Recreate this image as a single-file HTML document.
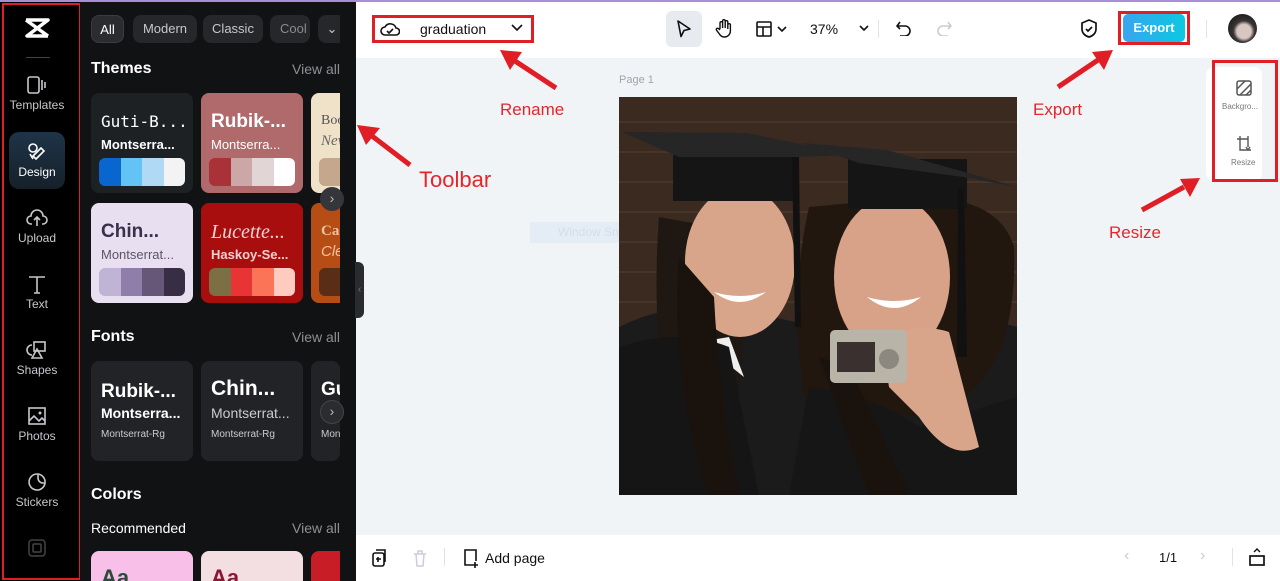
<!DOCTYPE html>
<html><head><meta charset="utf-8"><style>
*{margin:0;padding:0;box-sizing:border-box}
html,body{width:1280px;height:581px;overflow:hidden}
body{position:relative;font-family:"Liberation Sans",sans-serif;background:#f1f4f7}
.abs{position:absolute}
#side{left:0;top:0;width:80px;height:581px;background:#000}
#redside{left:2px;top:3px;width:79px;height:577px;border:2px solid #e01e25}
.nav{position:absolute;left:0;width:74px;text-align:center;color:#c8c8cc;font-size:12px}
.nav svg{display:block;margin:0 auto 3px}
#panel{left:80px;top:0;width:276px;height:581px;background:#111214;overflow:hidden}
.chip{position:absolute;top:15px;height:28px;border-radius:8px;background:#26272b;color:#c7c8cc;font-size:13px;line-height:28px;text-align:center}
.h{position:absolute;color:#fff;font-weight:bold;font-size:16px}
.va{position:absolute;right:16px;color:#8e8f94;font-size:14px}
.card{position:absolute;width:102px;height:100px;border-radius:8px;overflow:hidden}
.t1{position:absolute;left:10px;top:18px;font-size:19px;font-weight:bold;white-space:nowrap}
.t2{position:absolute;left:10px;top:44px;font-size:13px;white-space:nowrap}
.pal{position:absolute;left:8px;top:65px;width:86px;height:28px;border-radius:6px;overflow:hidden;display:flex}
.pal i{flex:1}
#top{left:356px;top:0;width:924px;height:58px;background:#fff}
#bot{left:356px;top:535px;width:924px;height:46px;background:#fff}
.ann{position:absolute;color:#e4262b;font-size:17px}
</style></head><body>
<div class="abs" style="left:0;top:0;width:1280px;height:2px;background:#a78fd8;z-index:5"></div>

<div id="side" class="abs">
 <svg class="abs" style="left:24px;top:17px" width="26" height="22" viewBox="0 0 26 22"><path d="M2 3h22L3 19h21M2 3l22 16" stroke="#fff" stroke-width="3.5" fill="none" stroke-linejoin="round"/></svg>
 <div class="abs" style="left:26px;top:57px;width:24px;height:1px;background:#444"></div>
 <div class="nav" style="top:75px"><svg width="22" height="20" viewBox="0 0 22 20"><rect x="2" y="2" width="11" height="16" rx="2" stroke="#c8c8cc" stroke-width="1.6" fill="none"/><path d="M16 5v10M19 7v6" stroke="#c8c8cc" stroke-width="1.6"/></svg>Templates</div>
 <div class="abs" style="left:9px;top:132px;width:56px;height:57px;border-radius:10px;background:linear-gradient(#1e3448,#16202a)"></div>
 <div class="nav" style="top:142px;color:#fff"><svg width="22" height="20" viewBox="0 0 22 20"><circle cx="7" cy="6" r="4" stroke="#fff" stroke-width="1.6" fill="none"/><path d="M10 17l8-8-3-3-8 8zM4 12l3 5" stroke="#fff" stroke-width="1.6" fill="none"/></svg>Design</div>
 <div class="nav" style="top:208px"><svg width="22" height="20" viewBox="0 0 22 20"><path d="M6 16H5a4 4 0 010-8 6 6 0 0112 0 4 4 0 010 8h-1M11 9v9M8 12l3-3 3 3" stroke="#c8c8cc" stroke-width="1.6" fill="none"/></svg>Upload</div>
 <div class="nav" style="top:274px"><svg width="22" height="20" viewBox="0 0 22 20"><path d="M3 3h16M11 3v16M8 19h6" stroke="#c8c8cc" stroke-width="1.6" fill="none"/></svg>Text</div>
 <div class="nav" style="top:340px"><svg width="22" height="20" viewBox="0 0 22 20"><rect x="8" y="2" width="11" height="9" stroke="#c8c8cc" stroke-width="1.6" fill="none"/><path d="M6 5a5 5 0 000 10M11 9l-5 9h10z" stroke="#c8c8cc" stroke-width="1.6" fill="none"/></svg>Shapes</div>
 <div class="nav" style="top:406px"><svg width="22" height="20" viewBox="0 0 22 20"><rect x="3" y="2" width="16" height="16" stroke="#c8c8cc" stroke-width="1.6" fill="none"/><path d="M3 15l5-5 5 5 3-3 3 3" stroke="#c8c8cc" stroke-width="1.6" fill="none"/><circle cx="14" cy="7" r="1.5" fill="#c8c8cc"/></svg>Photos</div>
 <div class="nav" style="top:472px"><svg width="22" height="20" viewBox="0 0 22 20"><path d="M19 11A8 8 0 1111 2a8 8 0 018 9zM12 2v4a5 5 0 005 5h2" stroke="#c8c8cc" stroke-width="1.6" fill="none"/></svg>Stickers</div>
 <svg class="abs" style="left:28px;top:539px" width="18" height="18"><rect x="1" y="1" width="16" height="16" rx="3" stroke="#444" stroke-width="1.5" fill="none"/><rect x="5" y="5" width="8" height="8" rx="1" stroke="#444" stroke-width="1.5" fill="none"/></svg>
</div>
<div id="redside" class="abs"></div>

<div id="panel" class="abs">
 <div class="chip" style="left:11px;width:33px;background:#2a2c30;border:1px solid #3a3c40;color:#fff">All</div>
 <div class="chip" style="left:53px;width:64px">Modern</div>
 <div class="chip" style="left:123px;width:60px">Classic</div>
 <div class="chip" style="left:190px;width:40px;text-align:left;padding-left:10px;color:#8a8b90">Cool</div>
 <div class="chip" style="left:238px;width:28px">⌄</div>
 <div class="h" style="left:11px;top:60px">Themes</div><div class="va" style="top:61px">View all</div>
 <div class="card" style="left:11px;top:93px;background:#1d2124"><div class="t1" style="color:#fff;font-family:'DejaVu Sans Mono',monospace;font-weight:normal;font-size:16px;top:19px">Guti-B...</div><div class="t2" style="color:#fff;font-weight:bold">Montserra...</div><div class="pal"><i style="background:#0a66cf"></i><i style="background:#63c3f5"></i><i style="background:#b0d9f5"></i><i style="background:#f3f3f3"></i></div></div>
 <div class="card" style="left:121px;top:93px;background:#b16a6c"><div class="t1" style="color:#fff">Rubik-...</div><div class="t2" style="color:#fff">Montserra...</div><div class="pal"><i style="background:#a83237"></i><i style="background:#cba7a7"></i><i style="background:#e1d5d5"></i><i style="background:#fff"></i></div></div>
 <div class="card" style="left:231px;top:93px;background:#efe2c9;width:40px"><div class="t1" style="color:#555;font-family:'Liberation Serif',serif;font-weight:normal;font-size:14px;top:20px">Boo</div><div class="t2" style="color:#666;font-family:'Liberation Serif',serif;font-style:italic;font-size:15px;top:40px">New</div><div class="pal" style="background:#c4a78c"></div></div>
 <div class="card" style="left:11px;top:203px;background:#e8e0f1"><div class="t1" style="color:#3a2f4c">Chin...</div><div class="t2" style="color:#5c5566">Montserrat...</div><div class="pal"><i style="background:#bfb3d6"></i><i style="background:#8f7eaa"></i><i style="background:#665677"></i><i style="background:#372d45"></i></div></div>
 <div class="card" style="left:121px;top:203px;background:#a80e0e"><div class="t1" style="color:#f3d3d3;font-family:'Liberation Serif',serif;font-style:italic;font-weight:normal;font-size:20px">Lucette...</div><div class="t2" style="color:#f3d0d0;font-weight:bold">Haskoy-Se...</div><div class="pal"><i style="background:#7c6e45"></i><i style="background:#e93436"></i><i style="background:#fb7457"></i><i style="background:#ffcac0"></i></div></div>
 <div class="card" style="left:231px;top:203px;background:#b54d15;width:40px"><div class="t1" style="color:#f0c0a0;font-family:'Liberation Serif',serif;font-size:15px;top:20px">Ca</div><div class="t2" style="color:#f0c0a0;font-style:italic;font-size:15px;top:40px">Cle</div><div class="pal" style="background:#5a2d17"></div></div>
 <div class="abs" style="left:260px;top:0;width:16px;height:581px;background:#111214"></div>
 <div class="abs" style="left:240px;top:187px;width:24px;height:24px;border-radius:12px;background:#34363a;color:#bbb;text-align:center;line-height:22px;font-size:14px">›</div>
 <div class="h" style="left:11px;top:328px">Fonts</div><div class="va" style="top:329px">View all</div>
 <div class="card" style="left:11px;top:361px;background:#222327"><div class="t1" style="color:#fff;top:20px">Rubik-...</div><div class="t2" style="color:#fff;font-weight:bold;font-size:14px">Montserra...</div><div class="t2" style="color:#ccc;font-size:10px;top:68px">Montserrat-Rg</div></div>
 <div class="card" style="left:121px;top:361px;background:#222327"><div class="t1" style="color:#fff;font-size:21px;top:16px">Chin...</div><div class="t2" style="color:#ccc;font-size:14px">Montserrat...</div><div class="t2" style="color:#ccc;font-size:10px;top:68px">Montserrat-Rg</div></div>
 <div class="card" style="left:231px;top:361px;background:#222327;width:29px"><div class="t1" style="color:#fff;top:18px">Gu</div><div class="t2" style="color:#ccc;font-size:10px;top:68px">Mon</div></div>
 <div class="abs" style="left:240px;top:400px;width:24px;height:24px;border-radius:12px;background:#2a2c30;border:1px solid #444;color:#bbb;text-align:center;line-height:21px;font-size:14px">›</div>
 <div class="h" style="left:11px;top:486px">Colors</div>
 <div class="abs" style="left:11px;top:520px;color:#fff;font-size:14px">Recommended</div><div class="va" style="top:520px">View all</div>
 <div class="card" style="left:11px;top:551px;height:30px;border-radius:8px 8px 0 0;background:#f8c0e8"><div class="t1" style="color:#2c4a3a;top:14px;font-size:22px">Aa</div></div>
 <div class="card" style="left:121px;top:551px;height:30px;border-radius:8px 8px 0 0;background:#f3dfe2"><div class="t1" style="color:#8c1535;top:14px;font-size:22px">Aa</div></div>
 <div class="card" style="left:231px;top:551px;height:30px;border-radius:8px 0 0 0;background:#c81d26;width:29px"></div>
</div>
<div class="abs" style="left:355px;top:262px;width:9px;height:56px;background:#2a2b2e;border-radius:0 6px 6px 0;color:#777;font-size:10px;line-height:56px;text-align:center">‹</div>

<div id="top" class="abs">
 <div class="abs" style="left:16px;top:15px;width:162px;height:28px;border:3px solid #e01e25"></div>
 <svg class="abs" style="left:24px;top:20px" width="20" height="18" viewBox="0 0 20 18"><path d="M5 15a4 4 0 010-8 6 6 0 0111 1 3.5 3.5 0 010 7z" stroke="#111" stroke-width="1.6" fill="none"/><path d="M7 11l2 2 4-4" stroke="#111" stroke-width="1.6" fill="none"/></svg>
 <div class="abs" style="left:64px;top:21px;font-size:14px;color:#111">graduation</div>
 <svg class="abs" style="left:155px;top:24px" width="12" height="8"><path d="M1 1l5 5 5-5" stroke="#111" stroke-width="1.6" fill="none"/></svg>
 <div class="abs" style="left:310px;top:11px;width:36px;height:36px;border-radius:6px;background:#e7ebef"></div>
 <svg class="abs" style="left:319px;top:19px" width="18" height="20"><path d="M3 2l12 8-6 1.5-3 6z" stroke="#111" stroke-width="1.6" fill="none" stroke-linejoin="round"/></svg>
 <svg class="abs" style="left:358px;top:18px" width="20" height="20" viewBox="0 0 20 20"><path d="M6 11V5a1.3 1.3 0 012.6 0v5V3a1.3 1.3 0 012.6 0v7V4a1.3 1.3 0 012.6 0v7V7a1.3 1.3 0 012.6 0v6a6 6 0 01-6 6 6 6 0 01-5-3l-3-4a1.3 1.3 0 012-1.5L6 12" stroke="#111" stroke-width="1.4" fill="none"/></svg>
 <svg class="abs" style="left:400px;top:21px" width="34" height="16"><rect x="1" y="1" width="14" height="14" rx="1" stroke="#111" stroke-width="1.6" fill="none"/><path d="M1 6h14M7 6v9M22 6l4 4 4-4" stroke="#111" stroke-width="1.6" fill="none"/></svg>
 <div class="abs" style="left:454px;top:21px;font-size:14px;color:#111">37%</div>
 <svg class="abs" style="left:503px;top:25px" width="10" height="7"><path d="M1 1l4 4 4-4" stroke="#111" stroke-width="1.6" fill="none"/></svg>
 <div class="abs" style="left:522px;top:20px;width:1px;height:18px;background:#e3e3e3"></div>
 <svg class="abs" style="left:540px;top:20px" width="16" height="16"><path d="M4 2L1 6l3 3M1 6h8a5 5 0 010 10H4" stroke="#111" stroke-width="1.6" fill="none"/></svg>
 <svg class="abs" style="left:580px;top:20px" width="16" height="16"><path d="M12 2l3 4-3 3M15 6H7a5 5 0 000 10h5" stroke="#ccc" stroke-width="1.6" fill="none"/></svg>
 <svg class="abs" style="left:724px;top:19px" width="18" height="20"><path d="M9 1l7 3v6c0 4-3 7-7 8-4-1-7-4-7-8V4z" stroke="#111" stroke-width="1.7" fill="none"/><path d="M6 10l2 2 4-4" stroke="#111" stroke-width="1.7" fill="none"/></svg>
 <div class="abs" style="left:762px;top:11px;width:72px;height:34px;border:3px solid #e01e25"></div>
 <div class="abs" style="left:767px;top:14px;width:62px;height:28px;border-radius:5px;background:linear-gradient(90deg,#3aa5f0,#0bc8e0);color:#fff;font-weight:bold;font-size:13px;text-align:center;line-height:28px">Export</div>
 <div class="abs" style="left:850px;top:20px;width:1px;height:18px;background:#e3e3e3"></div>
 <div class="abs" style="left:872px;top:14px;width:29px;height:29px;border-radius:50%;background:radial-gradient(circle at 55% 60%,#d8c6c2 0 30%,#3a3434 45%,#222 70%)"></div>
</div>

<div class="abs" style="left:619px;top:74px;font-size:11px;color:#a0a5ac">Page 1</div>
<div class="abs" style="left:530px;top:222px;width:135px;height:21px;background:rgba(220,232,245,.6);color:#d6dde6;font-size:12px;line-height:21px;padding-left:28px">Window Snip</div>

<svg class="abs" style="left:619px;top:97px" width="398" height="398" viewBox="0 0 398 398">
 <rect width="398" height="398" fill="#3b2a1f"/>
 <g stroke="#4f3d30" stroke-width="2" opacity=".6"><path d="M0 25h398M0 55h398M0 85h398M0 115h398M0 145h398M0 175h398M0 205h398"/></g>
 <path d="M0 230 Q60 200 130 215 L200 230 Q300 200 398 230 V398H0z" fill="#1b1b1b"/>
 <path d="M40 120 Q30 250 60 398 H120 Q110 260 150 140z" fill="#1f1712"/>
 <path d="M190 110 Q170 200 185 300 L300 320 Q400 300 395 150 Q380 100 300 100z" fill="#21170f"/>
 <ellipse cx="121" cy="165" rx="55" ry="75" fill="#d9a58a"/>
 <ellipse cx="273" cy="180" rx="58" ry="80" fill="#d7a287"/>
 <path d="M95 195 Q121 215 147 195 Q121 203 95 195z" fill="#fff"/>
 <path d="M248 200 Q275 222 302 200 Q275 208 248 200z" fill="#fff"/>
 <path d="M80 245 L110 240 L125 280 L100 260z" fill="#eee"/>
 <path d="M0 250 Q60 230 110 250 L140 398 H0z" fill="#151515"/>
 <path d="M190 290 Q260 300 300 330 L398 300 V398 H170z" fill="#161616"/>
 <path d="M60 160 Q50 280 90 398 H120 Q100 300 95 200z" fill="#1a120d"/>
 <path d="M200 260 Q225 330 250 398 H290 Q260 330 230 270z" fill="#1a120d"/>
 <rect x="54" y="58" width="120" height="46" fill="#151515"/>
 <path d="M3 35 L128 36 L234 58 L174 60 L60 60z" fill="#262626"/>
 <rect x="229" y="62" width="119" height="50" fill="#151515"/>
 <path d="M183 46 L268 53 L398 90 L344 80 L240 66z" fill="#262626"/>
 <path d="M173 60 L176 230 L182 230 L180 60z" fill="#111"/>
 <path d="M339 92 L338 260 L348 260 L345 92z" fill="#111"/>
 <path d="M262 240 Q300 225 330 235 L360 350 Q330 365 300 320 L270 290z" fill="#d9a58a"/>
 <rect x="211" y="233" width="77" height="53" rx="5" fill="#b9b4a8"/>
 <rect x="218" y="245" width="38" height="30" fill="#3a3030"/>
 <circle cx="270" cy="262" r="10" fill="#8c887f"/>
</svg>

<div class="abs" style="left:1206px;top:67px;width:56px;height:114px;background:#fff;border-radius:8px"></div>
<div class="abs" style="left:1212px;top:60px;width:66px;height:122px;border:3px solid #e01e25"></div>
<svg class="abs" style="left:1236px;top:80px" width="16" height="16"><rect x="1" y="1" width="14" height="14" rx="2" stroke="#555" stroke-width="1.5" fill="none"/><path d="M1 9L9 1M4 15L15 4M10 15l5-5" stroke="#555" stroke-width="1.5"/></svg>
<div class="abs" style="left:1222px;top:102px;font-size:8px;color:#777">Backgro...</div>
<svg class="abs" style="left:1236px;top:135px" width="16" height="16"><path d="M4 1v14h11M1 4h11v8M12 1v3M14 12l-2 3-2-3" stroke="#555" stroke-width="1.4" fill="none"/></svg>
<div class="abs" style="left:1231px;top:158px;font-size:8px;color:#777">Resize</div>

<div id="bot" class="abs">
 <svg class="abs" style="left:16px;top:14px" width="16" height="18"><rect x="1" y="4" width="11" height="13" rx="2" stroke="#111" stroke-width="1.6" fill="none"/><path d="M4 1h9v12M6 8v5M4 10h5" stroke="#111" stroke-width="1.6" fill="none"/></svg>
 <svg class="abs" style="left:56px;top:14px" width="16" height="18"><path d="M2 5h12M6 5V2h4v3M4 5l1 12h6l1-12" stroke="#ccd" stroke-width="1.5" fill="none"/></svg>
 <div class="abs" style="left:88px;top:13px;width:1px;height:18px;background:#e3e3e3"></div>
 <svg class="abs" style="left:106px;top:13px" width="18" height="20"><path d="M11 17H3V2h11v11M13 14v6M10 17h6" stroke="#111" stroke-width="1.6" fill="none"/></svg>
 <div class="abs" style="left:129px;top:15px;font-size:14px;color:#111">Add page</div>
 <div class="abs" style="left:768px;top:12px;font-size:16px;color:#ccc">‹</div>
 <div class="abs" style="left:803px;top:15px;font-size:13px;color:#111">1/1</div>
 <div class="abs" style="left:844px;top:12px;font-size:16px;color:#ccc">›</div>
 <div class="abs" style="left:876px;top:13px;width:1px;height:18px;background:#e3e3e3"></div>
 <svg class="abs" style="left:893px;top:12px" width="16" height="20"><path d="M5 5l3-3 3 3" stroke="#111" stroke-width="1.4" fill="none"/><rect x="1" y="9" width="14" height="9" stroke="#111" stroke-width="1.7" fill="none"/></svg>
</div>

<svg class="abs" style="left:0;top:0" width="1280" height="581" viewBox="0 0 1280 581">
 <g stroke="#e01e25" stroke-width="5" fill="#e01e25">
  <line x1="556" y1="88" x2="515" y2="61"/><polygon points="500,50 522,52 510,70" stroke="none"/>
  <line x1="410" y1="165" x2="372" y2="136"/><polygon points="357,125 380,128 366,145" stroke="none"/>
  <line x1="1058" y1="87" x2="1098" y2="60"/><polygon points="1113,50 1104,70 1092,52" stroke="none"/>
  <line x1="1142" y1="210" x2="1184" y2="187"/><polygon points="1200,178 1190,197 1180,179" stroke="none"/>
 </g>
</svg>
<div class="ann" style="left:500px;top:100px">Rename</div>
<div class="ann" style="left:419px;top:167px;font-size:22px">Toolbar</div>
<div class="ann" style="left:1033px;top:100px">Export</div>
<div class="ann" style="left:1109px;top:223px">Resize</div>
</body></html>
